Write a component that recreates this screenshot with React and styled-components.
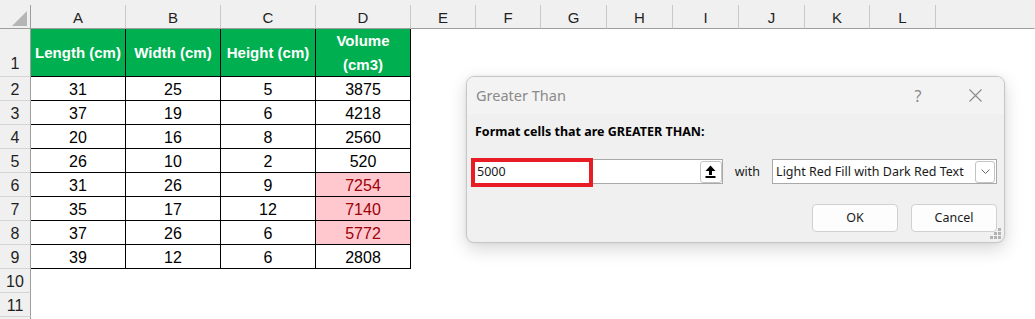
import React from "react";
import styled, { createGlobalStyle } from "styled-components";

const GlobalStyle = createGlobalStyle`
  html, body {
    margin: 0;
    padding: 0;
    background: #ffffff;
  }
  body {
    font-family: "Liberation Sans", Arial, sans-serif;
    overflow: hidden;
  }
`;

const Page = styled.div`
  position: relative;
  width: 1035px;
  height: 319px;
  overflow: hidden;
  background: #ffffff;
`;

const TopStrip = styled.div`
  height: 5px;
  background: #f0f0f0;
`;

const Sheet = styled.div`
  display: grid;
  grid-template-columns: 31px repeat(4, 95px) 65px 65px 66px 66px 66px 66px 65px 66px 1fr;
  grid-template-rows: 24px 48px repeat(11, 24px);
`;

const Corner = styled.div`
  box-sizing: border-box;
  background: #f0f0f0;
  border-right: 1px solid #9e9e9e;
  border-bottom: 1px solid #9e9e9e;
  display: flex;
  justify-content: flex-end;
  align-items: flex-end;
  padding: 0 3px 2px 0;
`;

const ColHead = styled.div`
  box-sizing: border-box;
  background: #f0f0f0;
  border-right: 1px solid ${({ $last }) => ($last ? "transparent" : "#c8c8c8")};
  border-bottom: 1px solid #9e9e9e;
  display: flex;
  align-items: center;
  justify-content: center;
  padding-top: 2px;
  font-size: 15px;
  color: #1f1f1f;
`;

const RowHead = styled.div`
  box-sizing: border-box;
  background: #f0f0f0;
  border-right: 1px solid #9e9e9e;
  border-bottom: 1px solid #d4d4d4;
  display: flex;
  justify-content: center;
  align-items: ${({ $tall }) => ($tall ? "flex-end" : "center")};
  padding: ${({ $tall }) => ($tall ? "0 0 4px 0" : "2px 0 0 0")};
  line-height: 17px;
  font-size: 16px;
  color: #1f1f1f;
`;

const Cell = styled.div`
  box-sizing: border-box;
  border-right: 1px solid ${({ $ruled }) => ($ruled ? "#000000" : "transparent")};
  border-bottom: 1px solid ${({ $ruled }) => ($ruled ? "#000000" : "transparent")};
  background: ${({ $hot }) => ($hot ? "#ffc7ce" : "#ffffff")};
  color: ${({ $hot }) => ($hot ? "#9c0006" : "#000000")};
  display: flex;
  align-items: center;
  justify-content: center;
  padding-top: 2px;
  font-size: 16px;
`;

const HeadCell = styled.div`
  box-sizing: border-box;
  border-right: 1px solid #000000;
  border-bottom: 1px solid #000000;
  background: #00b050;
  color: #ffffff;
  font-weight: bold;
  font-size: 15px;
  line-height: 24px;
  display: flex;
  align-items: center;
  justify-content: center;
  text-align: center;
  padding: 0 2px;
`;

/* dialog */

const Dialog = styled.div`
  position: absolute;
  left: 466px;
  top: 76px;
  width: 539px;
  height: 167px;
  box-sizing: border-box;
  border: 1px solid #c6c6c6;
  border-radius: 8px;
  background: #f0f0f0;
  box-shadow: 0 6px 18px rgba(0, 0, 0, 0.16), 0 0 4px rgba(0, 0, 0, 0.06);
  font-family: "Noto Sans", "Open Sans", sans-serif;
  overflow: hidden;
  display: flex;
  flex-direction: column;
`;

const TitleBar = styled.div`
  height: 37px;
  background: #f3f3f3;
  display: flex;
  align-items: center;
  padding-left: 9px;
`;

const Title = styled.div`
  flex: 1;
  font-size: 14.5px;
  color: #8a8a8a;
  padding-bottom: 2px;
`;

const TitleButton = styled.div`
  width: 46px;
  height: 37px;
  display: flex;
  align-items: center;
  justify-content: center;
  color: #8a8a8a;
  font-size: 16px;
  margin-right: ${({ $gap }) => $gap}px;
`;

const Body = styled.div`
  flex: 1;
  display: flex;
  flex-direction: column;
  padding: 0 7px 0 4px;
`;

const Prompt = styled.div`
  margin: 9px 0 0 4px;
  font-size: 12.5px;
  line-height: 17px;
  font-weight: bold;
  color: #000000;
`;

const InputRow = styled.div`
  display: flex;
  align-items: center;
  margin-top: 19px;
  font-size: 12.5px;
  color: #1a1a1a;
`;

const Field = styled.div`
  position: relative;
  box-sizing: border-box;
  width: ${({ $w }) => $w}px;
  height: 25px;
  background: #ffffff;
  border: 1px solid #a9a9a9;
  display: flex;
  align-items: center;
  padding-left: ${({ $pad }) => $pad}px;
`;

const FieldText = styled.span`
  flex: 1;
  white-space: nowrap;
  padding-bottom: 1px;
`;

const Highlight = styled.div`
  position: absolute;
  left: -1px;
  top: -2px;
  width: 122px;
  height: 29px;
  box-sizing: border-box;
  border: 4px solid #e81c24;
`;

const FieldButton = styled.div`
  box-sizing: border-box;
  width: ${({ $w }) => $w}px;
  height: 22px;
  margin-right: ${({ $mr }) => $mr}px;
  background: #ffffff;
  border: 1px solid #c4c4c4;
  border-radius: 3px;
  display: flex;
  align-items: center;
  justify-content: center;
`;

const With = styled.span`
  margin: 0 12px;
  padding-bottom: 1px;
`;

const ButtonRow = styled.div`
  display: flex;
  justify-content: flex-end;
  gap: 13px;
  margin-top: 20px;
`;

const Button = styled.div`
  box-sizing: border-box;
  width: 86px;
  height: 28px;
  background: #fdfdfd;
  border: 1px solid #d0d0d0;
  border-radius: 4px;
  display: flex;
  align-items: center;
  justify-content: center;
  font-size: 12.5px;
  color: #1a1a1a;
  padding-bottom: 1px;
`;

const Grip = styled.svg`
  position: absolute;
  right: 2px;
  bottom: 2px;
`;

const columns = ["A", "B", "C", "D", "E", "F", "G", "H", "I", "J", "K", "L"];
const headers = ["Length (cm)", "Width (cm)", "Height (cm)", "Volume (cm3)"];
const data = [
  [31, 25, 5, 3875],
  [37, 19, 6, 4218],
  [20, 16, 8, 2560],
  [26, 10, 2, 520],
  [31, 26, 9, 7254],
  [35, 17, 12, 7140],
  [37, 26, 6, 5772],
  [39, 12, 6, 2808],
];
const extraCols = 9; // E..L plus filler

const blankRow = (key, count) =>
  Array.from({ length: count }, (_, i) => <Cell key={`${key}-b${i}`} />);

const App = () => {
  return (
    <Page>
      <GlobalStyle />
      <TopStrip />
      <Sheet>
        <Corner>
          <svg width="15" height="15" viewBox="0 0 15 15">
            <polygon points="15,0 15,15 0,15" fill="#b5b5b5" />
          </svg>
        </Corner>
        {columns.map((c) => (
          <ColHead key={c}>{c}</ColHead>
        ))}
        <ColHead $last />

        <RowHead $tall>1</RowHead>
        {headers.map((h) => (
          <HeadCell key={h}>{h}</HeadCell>
        ))}
        {blankRow("h", extraCols)}

        {data.map((row, r) => (
          <React.Fragment key={r}>
            <RowHead>{r + 2}</RowHead>
            {row.map((v, c) => (
              <Cell key={c} $ruled $hot={c === 3 && v > 5000}>
                {v}
              </Cell>
            ))}
            {blankRow(`r${r}`, extraCols)}
          </React.Fragment>
        ))}

        {[10, 11].map((n) => (
          <React.Fragment key={n}>
            <RowHead>{n}</RowHead>
            {blankRow(`e${n}`, extraCols + 4)}
          </React.Fragment>
        ))}
        {/* row 12 only peeks in at the bottom edge */}
        <RowHead />
        {blankRow("e12", extraCols + 4)}
      </Sheet>

      <Dialog>
        <TitleBar>
          <Title>Greater Than</Title>
          <TitleButton $gap={11}>?</TitleButton>
          <TitleButton $gap={6}>
            <svg width="13" height="13" viewBox="0 0 13 13">
              <path d="M0.5 0.5 L12.5 12.5 M12.5 0.5 L0.5 12.5" stroke="#8a8a8a" strokeWidth="1.1" fill="none" />
            </svg>
          </TitleButton>
        </TitleBar>
        <Body>
          <Prompt>Format cells that are GREATER THAN:</Prompt>
          <InputRow>
            <Field $w={253} $pad={5}>
              <FieldText>5000</FieldText>
              <FieldButton $w={22} $mr={0}>
                <svg width="11" height="14" viewBox="0 0 11 14">
                  <polygon points="5.5,0.5 10.5,6 0.5,6" fill="#000" />
                  <rect x="4" y="5.5" width="3" height="4.5" fill="#000" />
                  <rect x="0.5" y="11" width="10" height="2" fill="#000" />
                </svg>
              </FieldButton>
              <Highlight />
            </Field>
            <With>with</With>
            <Field $w={226} $pad={3}>
              <FieldText>Light Red Fill with Dark Red Text</FieldText>
              <FieldButton $w={20} $mr={1}>
                <svg width="9" height="5" viewBox="0 0 9 5">
                  <path d="M0.5 0.5 L4.5 4.5 L8.5 0.5" stroke="#6a6a6a" strokeWidth="1" fill="none" />
                </svg>
              </FieldButton>
            </Field>
          </InputRow>
          <ButtonRow>
            <Button>OK</Button>
            <Button>Cancel</Button>
          </ButtonRow>
        </Body>
        <Grip width="12" height="12" viewBox="0 0 12 12">
          <rect x="8" y="0" width="3" height="3" fill="#b3b3b3" />
          <rect x="4" y="4" width="3" height="3" fill="#b3b3b3" />
          <rect x="8" y="4" width="3" height="3" fill="#b3b3b3" />
          <rect x="0" y="8" width="3" height="3" fill="#b3b3b3" />
          <rect x="4" y="8" width="3" height="3" fill="#b3b3b3" />
          <rect x="8" y="8" width="3" height="3" fill="#b3b3b3" />
        </Grip>
      </Dialog>
    </Page>
  );
};

export default App;
